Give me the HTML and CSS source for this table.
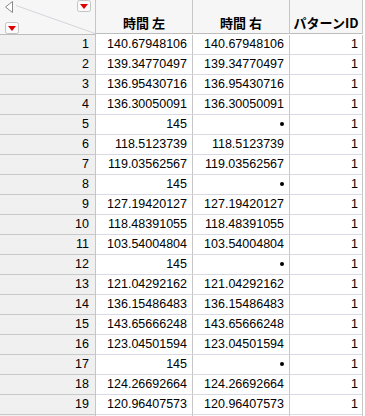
FILE: index.html
```html
<!DOCTYPE html>
<html>
<head>
<meta charset="utf-8">
<link rel="stylesheet" href="styles.css">
</head>
<body>
<div class="grid">
  <div class="corner">
    <svg class="corner-svg" width="95" height="34" viewBox="0 0 95 34">
      <line x1="16" y1="5.5" x2="95" y2="33.5" stroke="#d4d4dc" stroke-width="1"/>
      <path d="M12.5 1.5 L5.5 7 L12.5 12.5 Z" fill="#fff" stroke="#8a8a8a" stroke-width="1"/>
      <rect x="77.5" y="0.5" width="13" height="11" rx="2" fill="#fafafa" stroke="#c4c4c4"/>
      <path d="M80 4 L88 4 L84 9 Z" fill="#e00000"/>
      <rect x="5.5" y="22.5" width="13" height="11" rx="2" fill="#fafafa" stroke="#c4c4c4"/>
      <path d="M8 26 L16 26 L12 31 Z" fill="#e00000"/>
    </svg>
  </div>
  <div class="hd">時間 左</div>
  <div class="hd">時間 右</div>
  <div class="hd">パターンID</div>
</div>
<div class="grid" id="rows"></div>
<script src="script.js"></script>
</body>
</html>
```
FILE: styles.css
```css
html, body {
  margin: 0;
  padding: 0;
  background: #ffffff;
}
body {
  font-family: "Liberation Sans", "Noto Sans CJK JP", sans-serif;
  color: #000;
  width: 365px;
  height: 416px;
  overflow: hidden;
}
.grid {
  display: grid;
  grid-template-columns: 96px 97px 97px 73px;
}
.corner {
  height: 34px;
  background: #f6f6f6;
  border-right: 1px solid #c6c6c6;
  border-bottom: 1px solid #bdbdbd;
}
.corner-svg {
  display: block;
}
.hd {
  height: 34px;
  background: #f6f6f6;
  border-right: 1px solid #c6c6c6;
  border-bottom: 1px solid #bdbdbd;
  font-family: "Noto Sans CJK JP", sans-serif;
  font-weight: bold;
  font-size: 13px;
  display: flex;
  align-items: flex-end;
  justify-content: center;
  padding-bottom: 3px;
  box-sizing: border-box;
  line-height: 14px;
  white-space: nowrap;
}
.lbl, .cell {
  height: 20px;
  box-sizing: border-box;
  font-size: 12.5px;
  line-height: 19px;
  text-align: right;
  border-right: 1px solid #c6c6c6;
}
.lbl {
  background: #f0f0f0;
  border-bottom: 1px solid #c9c9c9;
  padding-right: 6px;
}
.cell {
  border-bottom: 1px solid #d9d9e6;
  padding-right: 5px;
}
.cell.c3 {
  padding-right: 4px;
}
.dot {
  display: inline-block;
  width: 4px;
  height: 4px;
  border-radius: 50%;
  background: #000;
  vertical-align: middle;
  margin-bottom: 1px;
}
```
FILE: script.js
```js
var data = [
  ["140.67948106","140.67948106"],
  ["139.34770497","139.34770497"],
  ["136.95430716","136.95430716"],
  ["136.30050091","136.30050091"],
  ["145",null],
  ["118.5123739","118.5123739"],
  ["119.03562567","119.03562567"],
  ["145",null],
  ["127.19420127","127.19420127"],
  ["118.48391055","118.48391055"],
  ["103.54004804","103.54004804"],
  ["145",null],
  ["121.04292162","121.04292162"],
  ["136.15486483","136.15486483"],
  ["143.65666248","143.65666248"],
  ["123.04501594","123.04501594"],
  ["145",null],
  ["124.26692664","124.26692664"],
  ["120.96407573","120.96407573"],
  ["",""]
];
var rows = document.getElementById("rows");
data.forEach(function (r, i) {
  var l = document.createElement("div");
  l.className = "lbl";
  l.textContent = i < 19 ? String(i + 1) : "";
  rows.appendChild(l);
  var a = document.createElement("div");
  a.className = "cell";
  a.textContent = r[0];
  rows.appendChild(a);
  var b = document.createElement("div");
  b.className = "cell";
  if (r[1] === null) {
    var d = document.createElement("span");
    d.className = "dot";
    b.appendChild(d);
  } else {
    b.textContent = r[1];
  }
  rows.appendChild(b);
  var c = document.createElement("div");
  c.className = "cell c3";
  c.textContent = i < 19 ? "1" : "";
  rows.appendChild(c);
});
```
